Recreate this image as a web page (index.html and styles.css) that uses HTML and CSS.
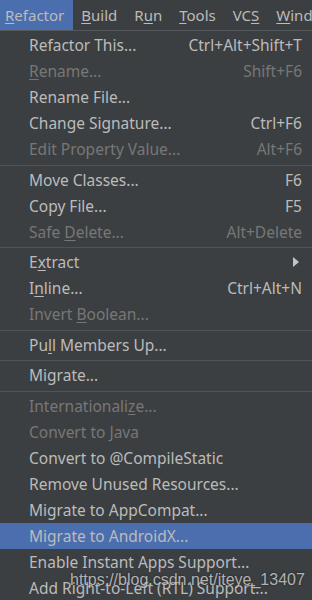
FILE: index.html
```html
<!doctype html>
<html lang="en">
<head>
    <link rel="stylesheet" href="styles.css">
    <meta charset="UTF-8">
    <title>Refactor menu</title>
</head>
<body>
    <div class="menubar">
        <span class="top active"><u>R</u>efactor</span>
        <span class="top"><u>B</u>uild</span>
        <span class="top">R<u>u</u>n</span>
        <span class="top"><u>T</u>ools</span>
        <span class="top">VC<u>S</u></span>
        <span class="top"><u>W</u>indow</span>
    </div>

    <div class="menu">
        <div class="item"><span>Refactor This...</span><span class="key">Ctrl+Alt+Shift+T</span></div>
        <div class="item off"><span><u>R</u>ename...</span><span class="key">Shift+F6</span></div>
        <div class="item"><span>Rename File...</span></div>
        <div class="item"><span>Change Signature...</span><span class="key">Ctrl+F6</span></div>
        <div class="item off"><span>Edit Property Value...</span><span class="key">Alt+F6</span></div>
        <div class="sep"></div>

        <div class="item"><span>Move Classes...</span><span class="key">F6</span></div>
        <div class="item"><span>Copy File...</span><span class="key">F5</span></div>
        <div class="item off"><span>Safe <u>D</u>elete...</span><span class="key">Alt+Delete</span></div>
        <div class="sep thin"></div>

        <div class="item"><span>E<u>x</u>tract</span><span class="arrow"></span></div>
        <div class="item"><span>I<u>n</u>line...</span><span class="key">Ctrl+Alt+N</span></div>
        <div class="item off"><span>Invert <u>B</u>oolean...</span></div>
        <div class="sep"></div>

        <div class="item"><span>Pu<u>l</u>l Members Up...</span></div>
        <div class="sep thin"></div>

        <div class="item"><span>Migrate...</span></div>
        <div class="sep"></div>

        <div class="item off"><span>Internationali<u>z</u>e...</span></div>
        <div class="item off"><span>Convert to Java</span></div>
        <div class="item"><span>Convert to @CompileStatic</span></div>
        <div class="item"><span>Remove Unused Resources...</span></div>
        <div class="item"><span>Migrate to AppCompat...</span></div>
        <div class="item selected"><span>Migrate to AndroidX...</span></div>
        <div class="item"><span>Enable Instant Apps Support...</span></div>
        <div class="item"><span>Add Right-to-Left (RTL) Support...</span></div>
    </div>

    <!-- blog watermark stamped over the screenshot -->
    <div class="watermark">https://blog.csdn.net/iteye_13407</div>
</body>
</html>
```

FILE: styles.css
```css
body {
    margin: 0;
    background-color: #3c3f41;
    font-family: "Noto Sans", "Open Sans", sans-serif;
    font-size: 15.5px;
    color: #bbbbbb;
    overflow: hidden;
    position: relative;
    height: 600px;
}

u {
    text-decoration: underline;
    text-underline-offset: 2px;
    text-decoration-thickness: 1px;
    text-decoration-skip-ink: none;
}

.menubar {
    display: flex;
    height: 30px;
    border-bottom: 1px solid #55585a;
    white-space: nowrap;
    margin-left: -3px;
    font-size: 15px;
}

.top {
    padding: 0 9px 0 8px;
    line-height: 30px;
}

.top.active {
    background-color: #4b6eaf;
}

.menu {
    padding-top: 1px;
}

.item {
    display: flex;
    justify-content: space-between;
    align-items: center;
    height: 26px;
    padding: 0 10px 0 29px;
    white-space: nowrap;
}

.item.off {
    color: #777777;
}

.item.selected {
    background-color: #4b6eaf;
}

.arrow {
    width: 0;
    height: 0;
    margin-right: 3px;
    border-top: 5px solid transparent;
    border-bottom: 5px solid transparent;
    border-left: 6px solid #c4c4c4;
}

.sep {
    height: 1px;
    margin: 3px 0 1px;
    background-color: #515355;
}

.sep.thin {
    margin: 2px 0 1px;
}

.watermark {
    position: absolute;
    left: 70px;
    top: 571px;
    font-family: "Liberation Sans", Arial, sans-serif;
    font-size: 16px;
    color: rgba(225, 225, 225, 0.75);
    text-shadow: 0 0 2px rgba(0, 0, 0, 0.6);
    white-space: nowrap;
}
```
